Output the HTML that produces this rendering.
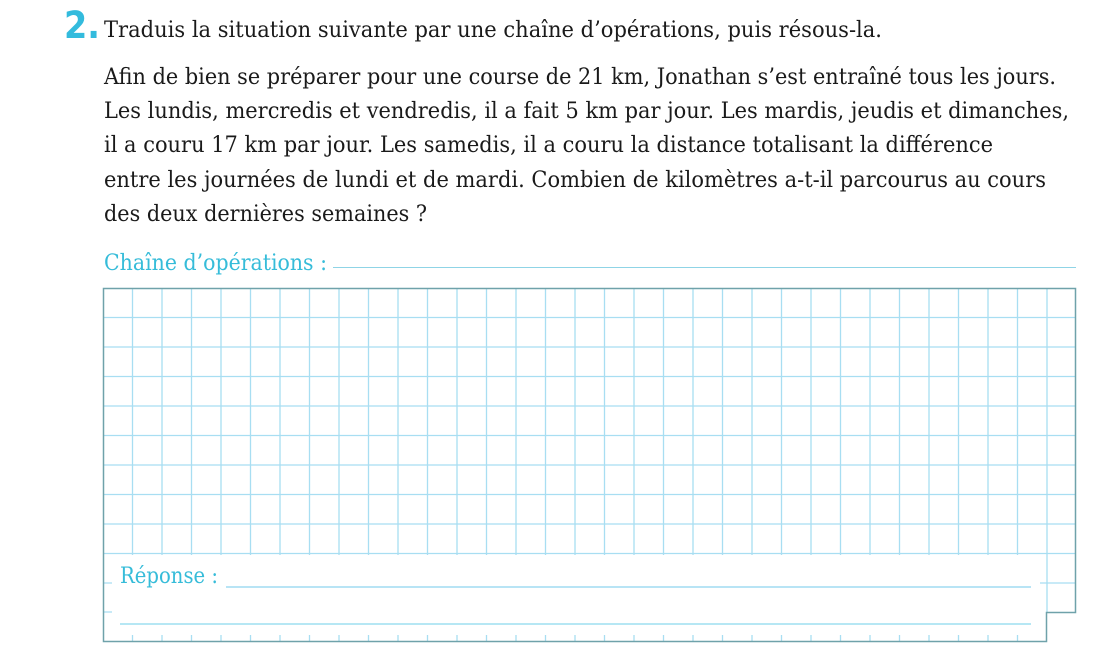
<!DOCTYPE html>
<html><head><meta charset="utf-8"><style>
html,body{margin:0;padding:0;background:#fff;width:1098px;height:661px;overflow:hidden}
svg{display:block}
.t{font-family:"DejaVu Serif","Liberation Serif",serif;font-size:22px;fill:#1a1a1a}
.c{font-family:"DejaVu Serif","Liberation Serif",serif;font-size:22px;fill:#36bcd9}
</style></head><body>
<svg width="1098" height="661" viewBox="0 0 1098 661" xmlns="http://www.w3.org/2000/svg">
<text x="64" y="38" font-family="'DejaVu Sans','Liberation Sans',sans-serif" font-weight="bold" font-size="37" fill="#33bbdd" textLength="36" lengthAdjust="spacingAndGlyphs">2.</text>
<text class="t" x="104" y="37" textLength="778" lengthAdjust="spacingAndGlyphs">Traduis la situation suivante par une chaîne d’opérations, puis résous-la.</text>
<text class="t" x="104" y="84" textLength="952" lengthAdjust="spacingAndGlyphs">Afin de bien se préparer pour une course de 21 km, Jonathan s’est entraîné tous les jours.</text>
<text class="t" x="104" y="118" textLength="965" lengthAdjust="spacingAndGlyphs">Les lundis, mercredis et vendredis, il a fait 5 km par jour. Les mardis, jeudis et dimanches,</text>
<text class="t" x="104" y="152" textLength="889" lengthAdjust="spacingAndGlyphs">il a couru 17 km par jour. Les samedis, il a couru la distance totalisant la différence</text>
<text class="t" x="104" y="187" textLength="942" lengthAdjust="spacingAndGlyphs">entre les journées de lundi et de mardi. Combien de kilomètres a-t-il parcourus au cours</text>
<text class="t" x="104" y="221" textLength="323" lengthAdjust="spacingAndGlyphs">des deux dernières semaines ?</text>
<text class="c" x="104" y="270" textLength="223" lengthAdjust="spacingAndGlyphs">Chaîne d’opérations :</text>
<line x1="333" y1="267.5" x2="1076" y2="267.5" stroke="#8fd4e6" stroke-width="1"/>
<g stroke="#a8def2" stroke-width="1.3">
<path d="M132.5 288V641M162 288V641M191.5 288V641M221 288V641M250.5 288V641M280 288V641M309.5 288V641M339 288V641M368.5 288V641M398 288V641M427.5 288V641M457 288V641M486.5 288V641M516 288V641M545.5 288V641M575 288V641M604.5 288V641M634 288V641M663.5 288V641M693 288V641M722.5 288V641M752 288V641M781.5 288V641M811 288V641M840.5 288V641M870 288V641M899.5 288V641M929 288V641M958.5 288V641M988 288V641M1017.5 288V641M1047 288V612"/>
<path d="M103 317.5H1076M103 347H1076M103 376.5H1076M103 406H1076M103 435.5H1076M103 465H1076M103 494.5H1076M103 524H1076M103 553.5H1076M103 583H1076M103 612H112"/>
</g>
<rect x="112" y="555" width="928" height="80" fill="#fff"/>
<path d="M103.5 288.5H1075.5V612.5H1046.5V641.5H103.5Z" fill="none" stroke="#6fa2aa" stroke-width="1.5"/>
<text class="c" x="120" y="583" textLength="98" lengthAdjust="spacingAndGlyphs">Réponse :</text>
<line x1="226" y1="587" x2="1031" y2="587" stroke="#b8e4f5" stroke-width="2"/>
<line x1="120" y1="624" x2="1031" y2="624" stroke="#6ccfe8" stroke-width="1"/>
</svg>
</body></html>
